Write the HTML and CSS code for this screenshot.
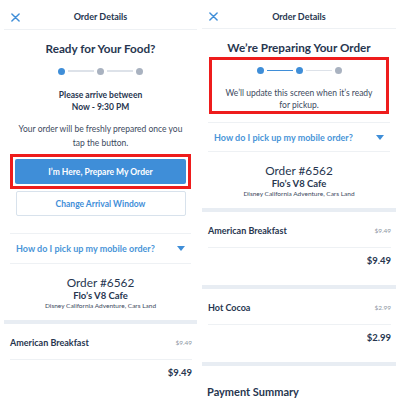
FILE: index.html
```html
<!DOCTYPE html>
<html lang="en">
<head>
<meta charset="utf-8">
<title>Order Details</title>
<link rel="stylesheet" href="styles.css">
</head>
<body>
<div class="screens">
  <section class="screen">
    <header class="nav">
      <svg class="close" viewBox="0 0 10 10" width="9" height="9"><path d="M1 1L9 9M9 1L1 9" stroke="#3f8ed8" stroke-width="1.6" stroke-linecap="round" fill="none"/></svg>
      <h1>Order Details</h1>
    </header>
    <div class="status status-ready">
      <h2>Ready for Your Food?</h2>
      <div class="stepper">
        <span class="dot active"></span><span class="bar"></span><span class="dot"></span><span class="bar"></span><span class="dot"></span>
      </div>
      <p class="arrive">Please arrive between<br>Now - 9:30 PM</p>
      <p class="note">Your order will be freshly prepared once you<br>tap the button.</p>
      <div class="highlight highlight-btn">
        <button class="btn primary">I’m Here, Prepare My Order</button>
      </div>
      <button class="btn outline">Change Arrival Window</button>
    </div>
    <div class="faq">
      <span>How do I pick up my mobile order?</span>
      <span class="caret"></span>
    </div>
    <div class="order-info">
      <div class="order-no">Order #6562</div>
      <div class="venue">Flo’s V8 Cafe</div>
      <div class="place">Disney California Adventure, Cars Land</div>
    </div>
    <div class="band"></div>
    <div class="item">
      <div class="item-row"><span class="item-name">American Breakfast</span><span class="item-price">$9.49</span></div>
      <div class="item-total">$9.49</div>
    </div>
  </section>

  <section class="screen">
    <header class="nav">
      <svg class="close" viewBox="0 0 10 10" width="9" height="9"><path d="M1 1L9 9M9 1L1 9" stroke="#3f8ed8" stroke-width="1.6" stroke-linecap="round" fill="none"/></svg>
      <h1>Order Details</h1>
    </header>
    <div class="status status-preparing">
      <h2>We’re Preparing Your Order</h2>
      <div class="highlight highlight-step">
        <div class="stepper">
          <span class="dot active"></span><span class="bar active"></span><span class="dot active"></span><span class="bar"></span><span class="dot"></span>
        </div>
        <p class="note">We’ll update this screen when it’s ready<br>for pickup.</p>
      </div>
    </div>
    <div class="faq">
      <span>How do I pick up my mobile order?</span>
      <span class="caret"></span>
    </div>
    <div class="order-info">
      <div class="order-no">Order #6562</div>
      <div class="venue">Flo’s V8 Cafe</div>
      <div class="place">Disney California Adventure, Cars Land</div>
    </div>
    <div class="band"></div>
    <div class="item">
      <div class="item-row"><span class="item-name">American Breakfast</span><span class="item-price">$9.49</span></div>
      <div class="item-total">$9.49</div>
    </div>
    <div class="band"></div>
    <div class="item">
      <div class="item-row"><span class="item-name">Hot Cocoa</span><span class="item-price">$2.99</span></div>
      <div class="item-total">$2.99</div>
    </div>
    <div class="band"></div>
    <h3 class="section-title">Payment Summary</h3>
  </section>
</div>
</body>
</html>
```
FILE: styles.css
```css
* { box-sizing: border-box; margin: 0; padding: 0; }
html, body { width: 400px; height: 400px; overflow: hidden; background: #ffffff; }
body {
  font-family: Lato, "Open Sans", "DejaVu Sans", sans-serif;
  color: #27364f;
}
.screens {
  display: grid;
  grid-template-columns: 193px 194px;
  column-gap: 5px;
  padding-left: 4px;
  height: 400px;
}
.screen {
  display: flex;
  flex-direction: column;
  overflow: hidden;
}
.nav {
  height: 30px;
  padding: 5px 6px 0;
  border-bottom: 1px solid #eef1f4;
  display: grid;
  grid-template-columns: 1fr auto 1fr;
  align-items: center;
}
.close { display: block; margin-left: 1px; }
.nav h1 {
  font-size: 9px;
  font-weight: 700;
  line-height: 12px;
  color: #27364f;
}
.status {
  display: flex;
  flex-direction: column;
  align-items: center;
  text-align: center;
}
.status h2 {
  font-size: 11.7px;
  font-weight: 700;
  line-height: 16px;
  margin-top: 10px;
  color: #27364f;
}
.stepper {
  display: flex;
  align-items: center;
  gap: 3px;
  height: 8px;
}
.status-ready .stepper { margin-top: 11px; }
.dot {
  width: 7px; height: 7px; border-radius: 50%;
  background: #a9b2c0;
}
.dot.active { background: #3f8ed8; }
.bar { width: 26px; height: 1.5px; background: #dde2e9; }
.bar.active { background: #3f8ed8; }
.arrive {
  margin-top: 14px;
  font-size: 8.5px;
  font-weight: 700;
  line-height: 12px;
}
.note {
  font-size: 8.5px;
  line-height: 13.5px;
  color: #3d4a60;
}
.status-ready .note { margin-top: 10px; }
.highlight {
  border: 3px solid #ee1c1c;
}
.highlight-btn {
  margin-top: 4px;
  padding: 2px;
  width: 181px;
}
.btn {
  display: block;
  width: 100%;
  height: 25px;
  font-family: inherit;
  font-size: 8.5px;
  font-weight: 700;
  border-radius: 2px;
}
.primary {
  background: #3f8ed8;
  color: #ffffff;
  border: 0;
}
.outline {
  width: 170px;
  margin-top: 2px;
  background: #ffffff;
  color: #3f8ed8;
  border: 1px solid #d8e2ec;
}
.highlight-step {
  margin-top: 2px;
  width: 180px;
  height: 57px;
  padding-top: 7px;
  display: flex;
  flex-direction: column;
  align-items: center;
}
.highlight-step .note { margin-top: 14px; line-height: 11.5px; }
.faq {
  margin: 17px 6px 0;
  height: 31px;
  border-top: 1px solid #eef1f4;
  border-bottom: 1px solid #eef1f4;
  display: flex;
  align-items: center;
  justify-content: space-between;
  padding: 0 6px;
  font-size: 9px;
  font-weight: 700;
  color: #4a95d8;
}
.status-preparing + .faq { margin-top: 8px; }
.caret {
  width: 0; height: 0;
  border-left: 4px solid transparent;
  border-right: 4px solid transparent;
  border-top: 5px solid #3f8ed8;
}
.order-info {
  display: flex;
  flex-direction: column;
  align-items: center;
  padding: 12px 0 10px;
}
.order-no { font-size: 11.8px; font-weight: 400; line-height: 14px; }
.venue { font-size: 9.5px; font-weight: 700; line-height: 11px; }
.place { font-size: 6.5px; line-height: 9px; color: #3d4a60; }
.band { height: 4px; background: #e8edf3; flex-shrink: 0; }
.item { margin: 0 5px 0 6px; }
.item-row {
  height: 36px;
  padding-top: 2px;
  border-bottom: 1px solid #eef1f4;
  display: flex;
  align-items: center;
  justify-content: space-between;
}
.item-name { font-size: 9px; font-weight: 700; }
.item-price { font-size: 6.5px; color: #8d96a3; }
.item-total {
  height: 37px;
  padding-top: 1px;
  line-height: 24px;
  text-align: right;
  font-size: 9.5px;
  font-weight: 700;
}
.section-title {
  margin: 18px 5px 0;
  font-size: 11px;
  font-weight: 700;
  line-height: 16px;
}
```
